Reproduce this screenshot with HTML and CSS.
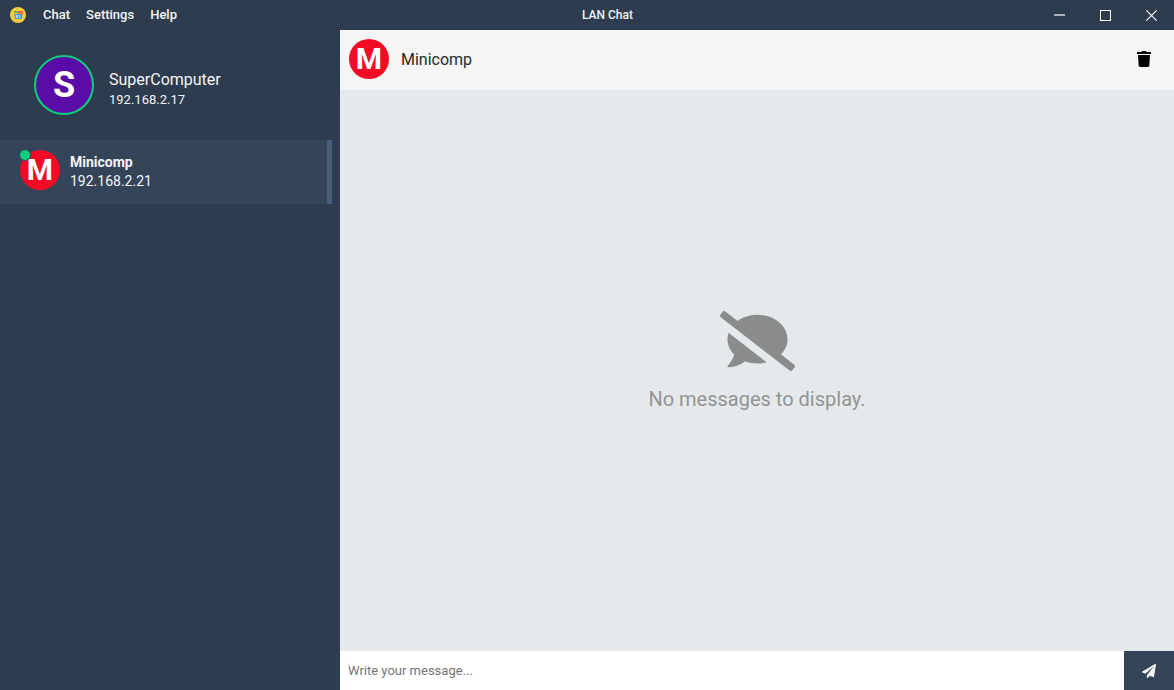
FILE: index.html
```html
<!DOCTYPE html>
<html lang="en">
<head>
<meta charset="utf-8">
<title>LAN Chat</title>
<link rel="stylesheet" href="styles.css">
</head>
<body>
<header class="titlebar">
  <div class="titlebar-start">
    <svg class="app-icon" viewBox="0 0 16 16" aria-hidden="true">
      <circle cx="8" cy="8" r="8" fill="#fbcb38"/>
      <rect x="4" y="4" width="4" height="2" fill="#5faa68"/>
      <rect x="8" y="4" width="5" height="4" fill="#f0694a"/>
      <path d="M4 7h8v5H5z" fill="#46a5cf"/>
      <path d="M6 8h2v3H6zM9 8h1v3H9z" fill="#a9dcef"/>
    </svg>
    <nav class="menu">
      <button class="menu-item" type="button">Chat</button>
      <button class="menu-item" type="button">Settings</button>
      <button class="menu-item" type="button">Help</button>
    </nav>
  </div>
  <h1 class="window-title">LAN Chat</h1>
  <div class="window-controls">
    <button class="window-button" type="button" aria-label="Minimize">
      <svg class="window-glyph" viewBox="0 0 11 11"><path d="M0 5h11" stroke="#fff" stroke-opacity=".6" stroke-width="2"/></svg>
    </button>
    <button class="window-button" type="button" aria-label="Maximize">
      <svg class="window-glyph" viewBox="0 0 11 11"><rect x=".5" y=".5" width="10" height="10" fill="none" stroke="#fff"/></svg>
    </button>
    <button class="window-button" type="button" aria-label="Close">
      <svg class="window-glyph" viewBox="0 0 11 11"><path d="M.3.3l10.4 10.4M10.7.3L.3 10.7" stroke="#fff" stroke-width="1.1"/></svg>
    </button>
  </div>
</header>
<div class="app">
  <aside class="sidebar">
    <section class="profile">
      <div class="avatar avatar-large">S</div>
      <div class="profile-text">
        <div class="profile-name">SuperComputer</div>
        <div class="profile-address">192.168.2.17</div>
      </div>
    </section>
    <ul class="users">
      <li>
        <button class="user" type="button">
          <span class="user-avatar"><span class="avatar">M</span><span class="status"></span></span>
          <span class="user-text">
            <span class="user-name">Minicomp</span>
            <span class="user-address">192.168.2.21</span>
          </span>
        </button>
      </li>
    </ul>
  </aside>
  <main class="chat">
    <div class="chat-header">
      <div class="avatar">M</div>
      <h2 class="chat-name">Minicomp</h2>
      <button class="delete" type="button" aria-label="Delete messages">
        <svg class="delete-icon" viewBox="0 0 448 512"><path fill="currentColor" d="M432 32H312l-9.4-18.7A24 24 0 0 0 281.1 0H166.8a23.72 23.72 0 0 0-21.4 13.3L136 32H16A16 16 0 0 0 0 48v32a16 16 0 0 0 16 16h416a16 16 0 0 0 16-16V48a16 16 0 0 0-16-16zM53.2 467a48 48 0 0 0 47.9 45h245.8a48 48 0 0 0 47.9-45L416 128H32z"/></svg>
      </button>
    </div>
    <div class="messages">
      <svg class="empty-icon" viewBox="0 0 640 512" aria-hidden="true"><path fill="currentColor" d="M64 240c0 49.6 21.4 95 57 130.7-12.6 50.3-54.3 95.2-54.8 95.8-2.2 2.3-2.8 5.7-1.5 8.7 1.3 2.9 4.1 4.8 7.3 4.8 66.3 0 116-31.8 140.6-51.4 32.7 12.3 69 19.4 107.4 19.4 27.4 0 53.7-3.6 78.4-10L72.9 186.4c-5.6 17.1-8.9 35-8.9 53.6zm569.8 218.1l-114.4-88.4C554.6 334.1 576 289.2 576 240c0-114.9-114.6-208-256-208-65.1 0-124.2 20.1-169.4 52.7L45.5 3.4C38.5-2 28.5-.8 23 6.2L3.4 31.4c-5.4 7-4.2 17 2.8 22.4l588.4 454.7c7 5.5 17 4.2 22.5-2.8l19.6-25.3c5.4-6.8 4.1-16.9-2.9-22.3z"/></svg>
      <p class="empty-text">No messages to display.</p>
    </div>
    <form class="composer">
      <input class="message-input" type="text" placeholder="Write your message..." aria-label="Message">
      <button class="send" type="submit" aria-label="Send">
        <svg class="send-icon" viewBox="0 0 512 512"><path fill="currentColor" d="M476 3.2L12.5 270.6c-18.1 10.4-15.8 35.6 2.2 43.2L121 358.4l287.3-253.2c5.5-4.9 13.3 2.6 8.6 8.3L176 407v80.5c0 23.6 28.5 32.9 42.5 15.8L282 426l124.6 52.2c14.2 6 30.4-2.9 33-18.2l72-432C515 7.8 493.3-6.8 476 3.2z"/></svg>
      </button>
    </form>
  </main>
</div>
</body>
</html>
```
FILE: styles.css
```css
* {
  box-sizing: border-box;
  margin: 0;
  padding: 0;
}

body {
  display: flex;
  flex-direction: column;
  height: 100vh;
  overflow: hidden;
  background: #2d3c4f;
  color: #f5f5f5;
  font-family: Roboto, "Liberation Sans", sans-serif;
  font-size: 13px;
}

button,
input {
  border: 0;
  background: none;
  color: inherit;
  font: inherit;
}

svg {
  display: block;
}

.titlebar {
  display: flex;
  align-items: center;
  height: 30px;
}

.titlebar-start {
  display: flex;
  align-items: center;
  gap: 9px;
  padding-left: 10px;
}

.app-icon {
  width: 16px;
  height: 16px;
}

.menu {
  display: flex;
}

.menu-item {
  padding: 0 8px;
  font-weight: 500;
  line-height: 28px;
}

.window-title {
  flex: 1;
  padding-right: 6px;
  font-size: 12px;
  font-weight: 500;
  text-align: center;
}

.window-controls {
  display: flex;
}

.window-button {
  display: grid;
  place-items: center;
  width: 46px;
  height: 30px;
}

.window-glyph {
  width: 11px;
  height: 11px;
}

.app {
  display: flex;
  flex: 1;
  min-height: 0;
}

.sidebar {
  flex: 0 0 340px;
  padding-right: 8px;
}

.profile {
  display: flex;
  align-items: center;
  gap: 15px;
  padding: 25px 34px;
}

.avatar {
  display: grid;
  place-items: center;
  flex: none;
  width: 40px;
  height: 40px;
  border-radius: 50%;
  background: #f50a25;
  color: #fff;
  font-size: 30px;
  font-weight: 700;
  line-height: 40px;
}

.avatar-large {
  width: 60px;
  height: 60px;
  border: 2px solid #0ccf7c;
  background: #5b0ba8;
  font-size: 36px;
}

.profile-text {
  padding-top: 10px;
}

.profile-name {
  font-size: 16px;
  line-height: 20px;
}

.profile-address {
  line-height: 20px;
}

.users {
  list-style: none;
}

.user {
  display: flex;
  align-items: flex-start;
  gap: 10px;
  width: 100%;
  padding: 10px 15px 13px 20px;
  border-right: 5px solid #465f7b;
  background: #34455a;
  text-align: left;
}

.user-avatar {
  position: relative;
}

.status {
  position: absolute;
  top: -1px;
  left: -1px;
  width: 12px;
  height: 12px;
  border: 1px solid #34455a;
  border-radius: 50%;
  background: #0ccf7c;
}

.user-text {
  display: grid;
  padding-top: 3px;
  font-size: 14px;
  line-height: 19px;
}

.user-name {
  font-weight: 700;
}

.chat {
  display: flex;
  flex: 1;
  flex-direction: column;
  min-width: 0;
  background: #e5e9eb;
}

.chat-header {
  display: flex;
  align-items: center;
  gap: 12px;
  height: 60px;
  padding: 0 14px 2px 9px;
  background: #f5f5f5;
  color: #2a2a2a;
}

.chat-name {
  flex: 1;
  font-size: 16px;
  font-weight: 400;
}

.delete {
  padding: 8px 9px;
  color: #000;
}

.delete-icon {
  width: 14px;
  height: 16px;
}

.messages {
  display: flex;
  flex: 1;
  flex-direction: column;
  align-items: center;
  justify-content: center;
  gap: 16px;
  padding-bottom: 20px;
  color: #8a8c8b;
}

.empty-icon {
  width: 75px;
  height: 60px;
}

.empty-text {
  color: #929494;
  font-size: 20px;
  line-height: 24px;
}

.composer {
  display: flex;
  height: 39px;
  background: #fff;
}

.message-input {
  flex: 1;
  min-width: 0;
  padding: 0 8px;
  color: #222;
  outline: 0;
}

.message-input::placeholder {
  color: #757575;
}

.send {
  display: grid;
  place-items: center;
  width: 50px;
  background: #34455a;
}

.send-icon {
  width: 14px;
  height: 14px;
}
```
